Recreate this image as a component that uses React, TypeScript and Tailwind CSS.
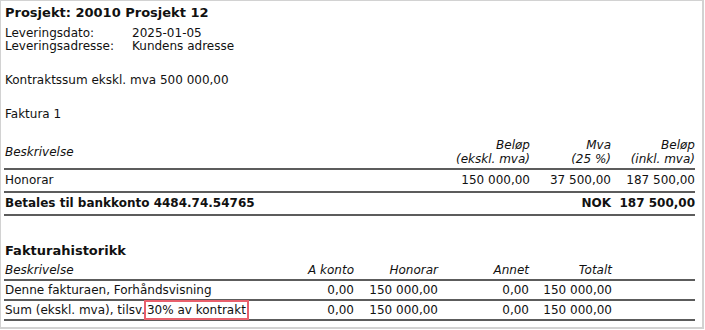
const FONT = "font-['DejaVu_Sans',Verdana,sans-serif]";

const LINE = 'h-[2px] bg-[#5c5c5c]';

function InvoiceTable() {
  const cols = 'grid grid-cols-[1fr_110px_81px_84px]';
  return (
    <div className="mr-[7px]">
      <div className={`${cols} items-center pb-[2px] italic leading-[14px]`}>
        <div className="pl-[1px]">Beskrivelse</div>
        <div className="text-right">Beløp<br />(ekskl. mva)</div>
        <div className="text-right">Mva<br />(25 %)</div>
        <div className="text-right">Beløp<br />(inkl. mva)</div>
      </div>
      <div className={LINE} />
      <div className={`${cols} py-[4px] leading-[13px]`}>
        <div className="pl-[1px]">Honorar</div>
        <div className="text-right">150 000,00</div>
        <div className="text-right">37 500,00</div>
        <div className="text-right">187 500,00</div>
      </div>
      <div className={LINE} />
      <div className={`${cols} py-[4px] font-bold leading-[13px]`}>
        <div className="col-span-2 pl-[1px]">Betales til bankkonto 4484.74.54765</div>
        <div className="text-right">NOK</div>
        <div className="text-right">187 500,00</div>
      </div>
      <div className={LINE} />
    </div>
  );
}

const history = [
  { desc: 'Denne fakturaen, Forhåndsvisning', akonto: '0,00', honorar: '150 000,00', annet: '0,00', totalt: '150 000,00' },
  { desc: 'Sum (ekskl. mva), tilsv.', mark: '30% av kontrakt', akonto: '0,00', honorar: '150 000,00', annet: '0,00', totalt: '150 000,00' },
];

function HistoryTable() {
  const cols = 'grid grid-cols-[280px_70px_84px_91px_83px_1fr]';
  return (
    <div className="mr-[7px]">
      <div className={`${cols} pb-[2px] italic leading-[13px]`}>
        <div className="pl-[1px]">Beskrivelse</div>
        <div className="text-right">A konto</div>
        <div className="text-right">Honorar</div>
        <div className="text-right">Annet</div>
        <div className="text-right">Totalt</div>
        <div />
      </div>
      {history.map((r) => (
        <div key={r.desc}>
          <div className={LINE} />
          <div className={`${cols} py-[2px] leading-[14px]`}>
            <div className="whitespace-nowrap pl-[1px]">
              {r.desc}
              {r.mark && (
                <span className="relative ml-[2px]">
                  {r.mark}
                  <span className="absolute -inset-x-[3px] -inset-y-[3px] border-2 border-[#e8606c]" />
                </span>
              )}
            </div>
            <div className="text-right">{r.akonto}</div>
            <div className="text-right">{r.honorar}</div>
            <div className="text-right">{r.annet}</div>
            <div className="text-right">{r.totalt}</div>
            <div />
          </div>
        </div>
      ))}
      <div className={LINE} />
    </div>
  );
}

export default function App() {
  return (
    <div className={`${FONT} h-[330px] w-[705px] bg-white text-[12px] text-[#111]`}>
      <div className="h-[329px] w-[704px] border border-r-2 border-b-2 border-[#d2d2d2] pl-[3px] pt-[4px]">
        <div className="pl-[1px] text-[13px] font-bold leading-[16px]">Prosjekt: 20010 Prosjekt 12</div>
        <div className="mt-[6px] grid grid-cols-[127px_1fr] pl-[1px] leading-[13px]">
          <div>Leveringsdato:</div>
          <div>2025-01-05</div>
          <div>Leveringsadresse:</div>
          <div>Kundens adresse</div>
        </div>
        <div className="mt-[20px] pl-[1px] leading-[14px]">Kontraktssum ekskl. mva 500 000,00</div>
        <div className="mt-[20px] pl-[1px] leading-[14px]">Faktura 1</div>
        <div className="mt-[17px]">
          <InvoiceTable />
        </div>
        <div className="mt-[27px] pl-[1px] text-[13px] font-bold leading-[16px]">Fakturahistorikk</div>
        <div className="mt-[5px]">
          <HistoryTable />
        </div>
      </div>
    </div>
  );
}
